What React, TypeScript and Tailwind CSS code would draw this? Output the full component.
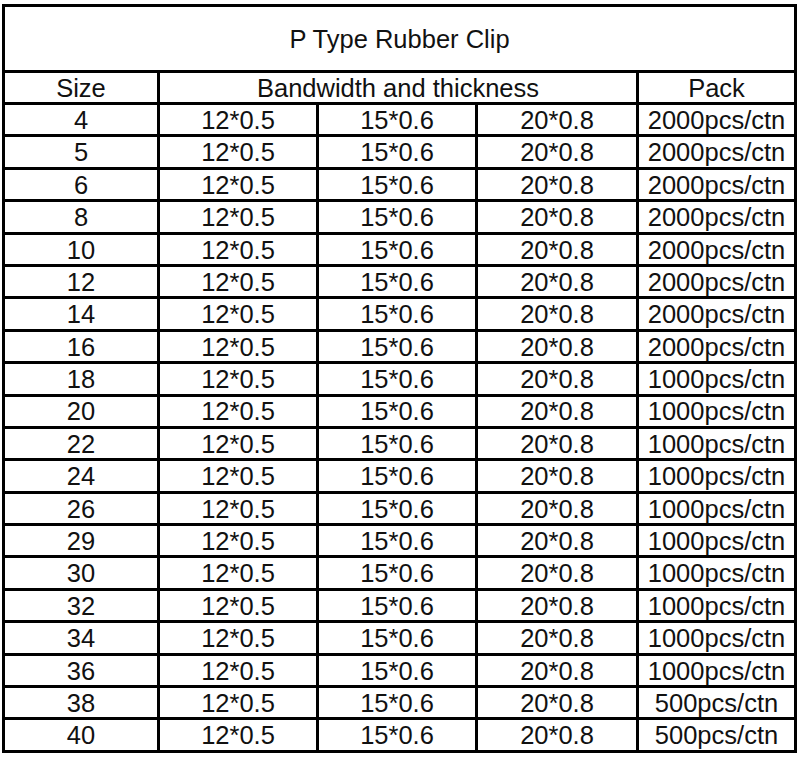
const sizes = [4, 5, 6, 8, 10, 12, 14, 16, 18, 20, 22, 24, 26, 29, 30, 32, 34, 36, 38, 40];

const packFor = (size: number) => {
  if (size <= 16) return '2000pcs/ctn';
  if (size <= 36) return '1000pcs/ctn';
  return '500pcs/ctn';
};

const cell = 'flex items-center justify-center pt-[2px] border-r-[3px] border-b-[3px] border-black';

const App = () => {
  return (
    <div
      className="w-[799px] h-[759px] bg-white pt-[4px] pl-[2px] text-[25.5px] leading-none text-[#111]"
      style={{ fontFamily: '"Liberation Sans", Arial, sans-serif' }}
    >
      <div className="grid w-[795px] grid-cols-[155px_159px_159px_161px_158px] border-l-[3px] border-t-[3px] border-black">
        <div className={`${cell} col-span-5 h-[66px]`}>P Type Rubber Clip</div>

        <div className={`${cell} h-[32px]`}>Size</div>
        <div className={`${cell} col-span-3 h-[32px]`}>Bandwidth and thickness</div>
        <div className={`${cell} h-[32px]`}>Pack</div>

        {sizes.map((size) => (
          <div key={size} className="contents">
            <div className={`${cell} h-[32.4px]`}>{size}</div>
            <div className={`${cell} h-[32.4px]`}>12*0.5</div>
            <div className={`${cell} h-[32.4px]`}>15*0.6</div>
            <div className={`${cell} h-[32.4px]`}>20*0.8</div>
            <div className={`${cell} h-[32.4px]`}>{packFor(size)}</div>
          </div>
        ))}
      </div>
    </div>
  );
};

export default App;
